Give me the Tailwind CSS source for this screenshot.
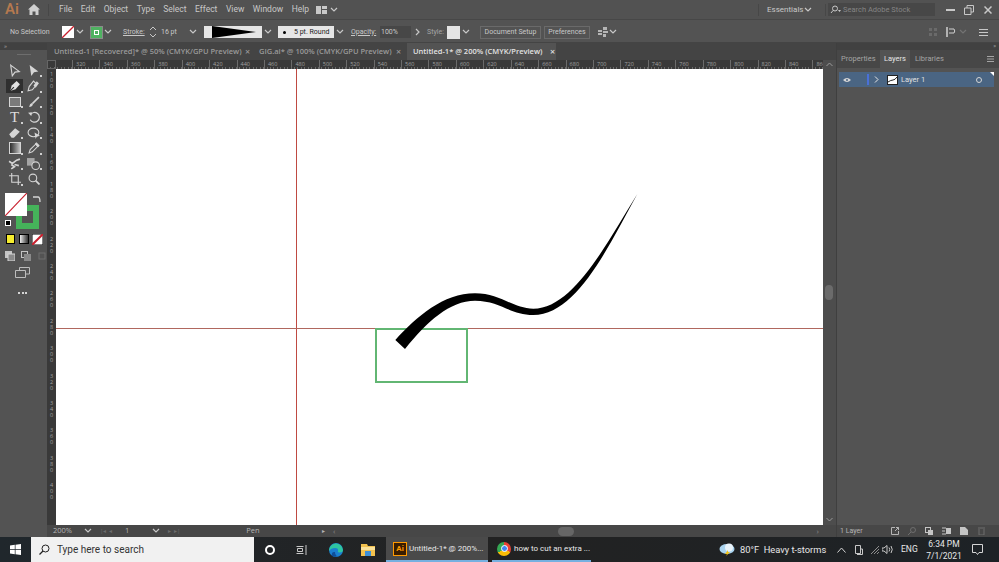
<!DOCTYPE html>
<html lang="en">
<head>
<meta charset="UTF-8">
<title>Adobe Illustrator</title>
<script src="https://cdn.jsdelivr.net/npm/@tailwindcss/browser@4"></script>
</head>
<body class="bg-[#535353]">
<div class="w-[999px] h-[562px] flex flex-col overflow-hidden font-['Open_Sans',sans-serif] text-[#c8c8c8]">

  <!-- Menu bar -->
  <div class="h-[20px] shrink-0 flex items-center bg-[#525252] font-['Roboto',sans-serif] text-[8.500px] border-b border-[#474747]">
    <span class="w-[22px] ml-[5px] text-[15px] leading-none font-semibold text-[#b5794f]">Ai</span>
    <svg class="w-[12px] h-[11px] ml-[1px]" viewBox="0 0 12 11"><path d="M6 0 12 5.500H10.500V11H7.500V7.500H4.500V11H1.500V5.500H0Z" fill="#d0d0d0"/></svg>
    <div class="w-px h-[12px] bg-[#474747] ml-[8px]"></div>
    <div class="flex gap-[8.500px] ml-[10px] w-[241px]">
      <span>File</span><span>Edit</span><span>Object</span><span>Type</span><span>Select</span><span>Effect</span><span>View</span><span>Window</span><span>Help</span>
    </div>
    <svg class="w-[11px] h-[8px] ml-[16px]" viewBox="0 0 11 8"><path d="M0 0H5V8H0ZM6 0H11V3H6ZM6 4H11V8H6Z" fill="#c8c8c8"/></svg>
    <svg class="w-[8px] h-[6px] ml-[3px]" viewBox="0 0 8 6"><path d="M1 1l3 3 3-3" fill="none" stroke="#c8c8c8" stroke-width="1.200"/></svg>
    <div class="w-px h-[12px] bg-[#474747] ml-auto"></div>
    <span class="ml-[8px] w-[33px] text-[8px]">Essentials</span>
    <svg class="w-[8px] h-[6px] ml-[4px]" viewBox="0 0 8 6"><path d="M1 1l3 3 3-3" fill="none" stroke="#c8c8c8" stroke-width="1.200"/></svg>
    <div class="w-px h-[12px] bg-[#474747] ml-[13px]"></div>
    <div class="w-[107px] h-[13px] ml-[2px] bg-[#474747] flex items-center pl-[2px] text-[7.500px] text-[#858585]">
      <svg class="w-[11px] h-[9px] shrink-0" viewBox="0 0 11 9"><circle cx="5" cy="3.500" r="2.500" fill="none" stroke="#c8c8c8"/><path d="M3 5.500 1 8" stroke="#c8c8c8"/><path d="M8 5h3l-1.500 2z" fill="#c8c8c8"/></svg>
      <span class="ml-[2px]">Search Adobe Stock</span>
    </div>
    <div class="w-[9px] h-[2px] bg-[#c8c8c8] ml-[11px]"></div>
    <svg class="w-[10px] h-[10px] ml-[9px]" viewBox="0 0 10 10"><path d="M.5 3H7V9.500H.5ZM3 3V.5H9.500V7H7" fill="none" stroke="#c8c8c8"/></svg>
    <svg class="w-[8px] h-[8px] ml-[10px] mr-[7px]" viewBox="0 0 8 8"><path d="M.5.5l7 7M7.500.5l-7 7" stroke="#c8c8c8" stroke-width="1.500"/></svg>
  </div>

  <!-- Control bar -->
  <div class="h-[23px] shrink-0 flex items-center pt-[2px] bg-[#535353] font-['Roboto',sans-serif] text-[7px] border-b border-[#444444] whitespace-nowrap">
    <span class="w-[46px] ml-[10px] shrink-0">No Selection</span>
    <svg class="w-[12px] h-[12px] ml-[6px] shrink-0" viewBox="0 0 12 12"><rect width="12" height="12" fill="#fff"/><path d="M0 12 12 0" stroke="#c8202e" stroke-width="1.300"/></svg>
    <svg class="w-[8px] h-[6px] ml-[2px] shrink-0" viewBox="0 0 8 6"><path d="M1 1l3 3 3-3" fill="none" stroke="#c8c8c8" stroke-width="1.200"/></svg>
    <div class="w-[13px] h-[13px] ml-[6px] shrink-0 bg-[#4fb261] flex items-center justify-center border border-[#8a8a8a]"><div class="w-[5px] h-[5px] border border-white"></div></div>
    <svg class="w-[8px] h-[6px] ml-[1px] shrink-0" viewBox="0 0 8 6"><path d="M1 1l3 3 3-3" fill="none" stroke="#c8c8c8" stroke-width="1.200"/></svg>
    <span class="w-[21px] ml-[11px] shrink-0 underline">Stroke:</span>
    <svg class="w-[8px] h-[12px] ml-[5px] shrink-0" viewBox="0 0 8 12"><path d="M1 4l3-3 3 3M1 8l3 3 3-3" fill="none" stroke="#c8c8c8"/></svg>
    <span class="w-[27px] ml-[4px] shrink-0">16 pt</span>
    <svg class="w-[8px] h-[6px] ml-[1px] shrink-0" viewBox="0 0 8 6"><path d="M1 1l3 3 3-3" fill="none" stroke="#c8c8c8" stroke-width="1.200"/></svg>
    <div class="w-[58px] h-[12px] ml-[7px] shrink-0 bg-[#e6e6e6] flex items-center pl-[8px]">
      <svg class="w-[44px] h-[12px]" viewBox="0 0 44 12"><path d="M0 0 44 6 0 12Z" fill="#000"/></svg>
    </div>
    <svg class="w-[8px] h-[6px] ml-[2px] shrink-0" viewBox="0 0 8 6"><path d="M1 1l3 3 3-3" fill="none" stroke="#c8c8c8" stroke-width="1.200"/></svg>
    <div class="w-[56px] h-[12px] ml-[6px] shrink-0 bg-[#e6e6e6] flex items-center text-[#222222]">
      <div class="w-[3px] h-[3px] rounded-full bg-black ml-[5px]"></div>
      <span class="ml-[8px]">5 pt. Round</span>
    </div>
    <svg class="w-[8px] h-[6px] ml-[2px] shrink-0" viewBox="0 0 8 6"><path d="M1 1l3 3 3-3" fill="none" stroke="#c8c8c8" stroke-width="1.200"/></svg>
    <span class="w-[25px] ml-[7px] shrink-0 underline">Opacity:</span>
    <div class="w-[31px] h-[12px] ml-[4px] shrink-0 bg-[#474747] pl-[1px] leading-[12px]">100%</div>
    <svg class="w-[7px] h-[8px] ml-[3px] shrink-0" viewBox="0 0 7 8"><path d="M2 1l3 3-3 3" fill="none" stroke="#c8c8c8" stroke-width="1.200"/></svg>
    <span class="w-[17px] ml-[6px] shrink-0 text-[#a5a5a5]">Style:</span>
    <div class="w-[13px] h-[13px] ml-[3px] shrink-0 bg-[#e4e4e4]"></div>
    <svg class="w-[8px] h-[6px] ml-[2px] shrink-0" viewBox="0 0 8 6"><path d="M1 1l3 3 3-3" fill="none" stroke="#c8c8c8" stroke-width="1.200"/></svg>
    <div class="w-[61px] h-[13px] ml-[10px] shrink-0 border border-[#6a6a6a] text-center leading-[11px]">Document Setup</div>
    <div class="w-[46px] h-[13px] ml-[3px] shrink-0 border border-[#6a6a6a] text-center leading-[11px]">Preferences</div>
    <svg class="w-[10px] h-[10px] ml-[8px] shrink-0" viewBox="0 0 10 10"><path d="M0 3H4V5H0ZM0 6H4V8H0ZM5 0H9V3H5ZM5 4H10V6H5ZM5 7H8V10H5Z" fill="#b5b5b5"/></svg>
    <svg class="w-[8px] h-[6px] ml-[1px] shrink-0" viewBox="0 0 8 6"><path d="M1 1l3 3 3-3" fill="none" stroke="#c8c8c8" stroke-width="1.200"/></svg>
    <svg class="w-[9px] h-[9px] ml-auto shrink-0" viewBox="0 0 9 9"><path d="M0 0H3V3H0ZM5 0H8V3H5ZM0 5H3V8H0ZM5 5H8V8H5Z" fill="#6a6a6a"/></svg>
    <svg class="w-[10px] h-[10px] ml-[8px] shrink-0" viewBox="0 0 10 10"><path d="M1 0V10" stroke="#d0d0d0" stroke-width="1.500"/><path d="M3 2H8Q9.500 4 8 6H3" fill="none" stroke="#d0d0d0"/></svg>
    <svg class="w-[8px] h-[6px] ml-[3px] shrink-0" viewBox="0 0 8 6"><path d="M1 1l3 3 3-3" fill="none" stroke="#737373" stroke-width="1.200"/></svg>
    <svg class="w-[9px] h-[7px] ml-[12px] mr-[11px] shrink-0" viewBox="0 0 9 7"><path d="M0 .5H9M0 3.500H9M0 6.500H9" stroke="#c8c8c8"/></svg>
  </div>

  <!-- Work area -->
  <div class="flex-1 min-h-0 flex">

    <!-- Tools -->
    <div class="w-[47px] shrink-0 flex flex-col bg-[#535353]">
      <div class="h-[7px] bg-[#414141] text-[6px] leading-[6px] pl-[4px] text-[#aaaaaa]">&raquo;</div>
      <div class="h-[13px] flex justify-center pt-[4px]"><div class="w-[14px] h-px bg-[#6e6e6e]"></div></div>
      <div class="relative grid grid-cols-[19px_19px] auto-rows-[15.500px] ml-[5px] place-items-center">
        <svg class="w-[12px] h-[13px]" viewBox="0 0 11 12"><path d="M1.500 1 9.500 7 5.500 7.500 3 11Z" fill="none" stroke="#d5d5d5"/></svg>
        <svg class="w-[12px] h-[13px]" viewBox="0 0 11 12"><path d="M1.500 1 9.500 7 5.500 7.500 3 11Z" fill="#d5d5d5"/></svg>
        <div class="w-[17px] h-[14px] bg-[#2f2f2f] flex items-center justify-center"><svg class="w-[12px] h-[12px]" viewBox="0 0 11 11"><path d="M1 10 2.500 5 7 1 10 4 6 8.500Z" fill="#e0e0e0"/><path d="M1 10 4.500 6.500" stroke="#2f2f2f"/></svg></div>
        <svg class="w-[13px] h-[12px]" viewBox="0 0 12 11"><path d="M1 10 2 6 6 1 9 4 5 9Z" fill="none" stroke="#d5d5d5"/><path d="M9 1 11 3 8 7 6 5Z" fill="#d5d5d5"/></svg>
        <div class="w-[12px] h-[10px] border border-[#d5d5d5] bg-[#7a7a7a]"></div>
        <svg class="w-[12px] h-[12px]" viewBox="0 0 11 11"><path d="M10 1 4 7" stroke="#d5d5d5" stroke-width="1.500"/><path d="M1 10Q1.500 7 3.500 6.500L4.500 7.500Q4 10 1 10Z" fill="#d5d5d5"/></svg>
        <span class="text-[15px] leading-none font-['Liberation_Serif',serif] text-[#dddddd]">T</span>
        <svg class="w-[13px] h-[12px]" viewBox="0 0 12 11"><path d="M3 3.500A4.500 4.500 0 1 1 3 8" fill="none" stroke="#d5d5d5" stroke-width="1.100"/><path d="M1 1.500 4.500 1 4 4.500Z" fill="#d5d5d5"/></svg>
        <svg class="w-[13px] h-[12px]" viewBox="0 0 11 10"><path d="M1 6 6 1 10 4 5 9H3Z" fill="#d5d5d5"/></svg>
        <svg class="w-[14px] h-[12px]" viewBox="0 0 13 11"><ellipse cx="6" cy="5" rx="5" ry="4" fill="none" stroke="#d5d5d5"/><path d="M7 5 12 8 9 9 8 11Z" fill="#d5d5d5"/></svg>
        <div class="w-[12px] h-[12px] border border-[#d5d5d5] bg-gradient-to-r from-[#2e2e2e] to-[#c5c5c5]"></div>
        <svg class="w-[12px] h-[12px]" viewBox="0 0 11 11"><path d="M1 10 2 7 7 2 9 4 4 9Z" fill="none" stroke="#d5d5d5"/><path d="M7 1 10 4" stroke="#d5d5d5" stroke-width="2"/></svg>
        <svg class="w-[13px] h-[12px]" viewBox="0 0 12 11"><path d="M1 3 4 5 8 2 11 1M3 6 6 8 3 10M6 6 10 7" fill="none" stroke="#d5d5d5" stroke-width="1.500"/></svg>
        <svg class="w-[13px] h-[12px]" viewBox="0 0 12 11"><rect x="0" y="0" width="7" height="7" fill="#a5a5a5"/><circle cx="8" cy="7" r="3.500" fill="#535353" stroke="#d5d5d5"/></svg>
        <svg class="w-[12px] h-[12px]" viewBox="0 0 11 11"><path d="M2.500 0V8.500H11M0 2.500H8.500V11" fill="none" stroke="#d5d5d5"/></svg>
        <svg class="w-[12px] h-[12px]" viewBox="0 0 11 11"><circle cx="4.500" cy="4.500" r="3.500" fill="none" stroke="#d5d5d5"/><path d="M7 7 10.500 10.500" stroke="#d5d5d5" stroke-width="1.500"/></svg>
        <!-- flyout markers on the tools -->
        <svg class="absolute left-0 top-0 w-[38px] h-[124px]" viewBox="0 0 38 124"><path d="M35 12h2v2h-2zM16 28h2v2h-2zM35 28h2v2h-2zM16 43h2v2h-2zM35 43h2v2h-2zM16 59h2v2h-2zM35 59h2v2h-2zM16 74h2v2h-2zM35 74h2v2h-2zM16 90h2v2h-2zM35 90h2v2h-2zM16 105h2v2h-2zM35 105h2v2h-2zM16 121h2v2h-2z" fill="#cfcfcf"/></svg>
      </div>
      <!-- fill and stroke -->
      <div class="relative h-[40px] mt-[6px] shrink-0">
        <div class="absolute left-[16px] top-[12px] w-[23px] h-[24px] border-[6px] border-[#45b35a]"></div>
        <svg class="absolute left-[5px] top-0 w-[22px] h-[23px]" viewBox="0 0 22 23"><rect width="22" height="23" fill="#fff"/><path d="M0 23 22 0" stroke="#c8202e" stroke-width="1.200"/></svg>
        <svg class="absolute left-[32px] top-[2px] w-[9px] h-[9px]" viewBox="0 0 9 9"><path d="M1 2H6Q8 2 8 7" fill="none" stroke="#d5d5d5" stroke-width="1.300"/></svg>
        <div class="absolute left-[5px] top-[27px] w-[6px] h-[6px] bg-black border border-white"></div>
      </div>
      <div class="flex items-center ml-[6px] gap-[3px] h-[12px]">
        <div class="w-[9px] h-[10px] bg-[#f6ec2e] border border-black"></div>
        <div class="w-[10px] h-[10px] ml-[1px] bg-gradient-to-r from-[#eeeeee] to-[#333333] border border-black"></div>
        <svg class="w-[11px] h-[11px]" viewBox="0 0 11 11"><rect width="11" height="11" fill="#fff" stroke="#000"/><path d="M0 11 11 0" stroke="#c8202e" stroke-width="2"/></svg>
      </div>
      <div class="flex items-center ml-[5px] gap-[5px] h-[12px] mt-[5px]">
        <svg class="w-[10px] h-[10px]" viewBox="0 0 10 10"><rect x="0" y="0" width="7" height="7" fill="#c5c5c5"/><rect x="3" y="3" width="7" height="7" fill="#8a8a8a" stroke="#d5d5d5"/></svg>
        <svg class="w-[10px] h-[10px] ml-[1px]" viewBox="0 0 10 10"><rect x="0.500" y="0.500" width="6" height="6" fill="none" stroke="#c5c5c5"/><rect x="3" y="3" width="7" height="7" fill="#8a8a8a"/></svg>
        <svg class="w-[8px] h-[8px] ml-[2px]" viewBox="0 0 8 8"><rect x="1" y="1" width="6" height="6" fill="none" stroke="#6e6e6e"/></svg>
      </div>
      <svg class="w-[15px] h-[11px] ml-[15px] mt-[5px]" viewBox="0 0 15 11"><path d="M4.500 3V.5H14.500V7H10.500M.5 3.500H10.500V10.500H.5Z" fill="none" stroke="#bdbdbd"/></svg>
      <div class="flex gap-[1.500px] ml-[18px] mt-[14px]">
        <div class="w-[2px] h-[2px] bg-[#d5d5d5]"></div><div class="w-[2px] h-[2px] bg-[#d5d5d5]"></div><div class="w-[2px] h-[2px] bg-[#d5d5d5]"></div>
      </div>
    </div>

    <!-- Document -->
    <div class="w-[789px] shrink-0 flex flex-col">
      <!-- Tabs -->
      <div class="h-[17px] shrink-0 flex items-center bg-[#444444] text-[7.500px] font-semibold text-[#9a9a9a] whitespace-nowrap">
        <span class="ml-[7px] w-[186px] pt-[1px]">Untitled-1 [Recovered]* @ 50% (CMYK/GPU Preview)</span>
        <span class="ml-[5px] w-[10px] text-[9px]">×</span>
        <span class="ml-[4px] w-[131px] pt-[1px]">GIG.ai* @ 100% (CMYK/GPU Preview)</span>
        <span class="ml-[6px] w-[10px] text-[9px]">×</span>
        <div class="ml-[1px] w-[149px] h-full bg-[#535353] flex items-center text-[#e2e2e2]">
          <span class="ml-[6px] w-[130px] pt-[1px]">Untitled-1* @ 200% (CMYK/Preview)</span>
          <span class="ml-[7px] text-[9px]">×</span>
        </div>
      </div>
      <!-- Horizontal ruler -->
      <div class="relative h-[9px] shrink-0 flex bg-[#393939] bg-[repeating-linear-gradient(90deg,#6b6b6b_0,#6b6b6b_1px,transparent_1px,transparent_3.430px)] bg-[length:100%_2px] bg-bottom bg-no-repeat">
        <div class="w-[9px] shrink-0 border border-[#666666]"></div>
        <div class="flex text-[5.500px] leading-[8px] text-[#a0a0a0] ml-[16px]" id="ruler-x"></div>
        <div class="absolute right-0 top-0 w-[13px] h-full bg-[#4d4d4d] flex items-center justify-center">
          <svg class="w-[7px] h-[5px]" viewBox="0 0 7 5"><path d="M.5 4 3.500 1 6.500 4" fill="none" stroke="#9a9a9a"/></svg>
        </div>
      </div>
      <!-- Canvas row -->
      <div class="flex-1 min-h-0 flex">
        <div class="w-[9px] shrink-0 bg-[#393939] flex flex-col items-center text-[5.500px] leading-[6px] text-[#a0a0a0] overflow-hidden" id="ruler-y"></div>
        <div class="w-[767px] shrink-0 bg-white relative overflow-hidden">
          <div class="absolute left-[240px] top-0 w-px h-full bg-[#bf4a42]"></div>
          <div class="absolute left-0 top-[259px] w-full h-px bg-[#b0675e]"></div>
          <div class="absolute left-[319px] top-[259px] w-[93px] h-[55px] border-2 border-[#62b673]"></div>
          <svg class="absolute left-[304px] top-[111px] w-[290px] h-[210px]" viewBox="0 0 870 630"><path d="M106 480C170 410 250 340 345 340C420 340 460 386 520 386C640 386 740 190 832 42C745 200 650 405 520 405C450 405 420 362 345 362C270 362 200 425 135 507Z" fill="#000"/></svg>
        </div>
        <div class="w-[13px] shrink-0 bg-[#4d4d4d] flex flex-col items-center relative">
          <div class="absolute top-[216px] left-[2px] w-[8px] h-[15px] rounded-full bg-[#6b6b6b]"></div>
          <svg class="absolute bottom-[3px] left-[3px] w-[7px] h-[5px]" viewBox="0 0 7 5"><path d="M.5 1 3.500 4 6.500 1" fill="none" stroke="#9a9a9a"/></svg>
        </div>
      </div>
      <!-- Status bar -->
      <div class="h-[12px] shrink-0 flex items-center bg-[#474747] text-[7.500px] text-[#b5b5b5] whitespace-nowrap">
        <span class="w-[20px] ml-[6px]">200%</span>
        <svg class="w-[8px] h-[6px] ml-[11px]" viewBox="0 0 8 6"><path d="M1 1l3 3 3-3" fill="none" stroke="#c8c8c8" stroke-width="1.200"/></svg>
        <span class="ml-[8px] w-[24px] text-[#6e6e6e] text-[6px]">|◂ &nbsp;◂</span>
        <span class="ml-[1px] w-[24px]">1</span>
        <svg class="w-[8px] h-[6px] ml-[3px]" viewBox="0 0 8 6"><path d="M1 1l3 3 3-3" fill="none" stroke="#c8c8c8" stroke-width="1.200"/></svg>
        <span class="ml-[8px] w-[24px] text-[#6e6e6e] text-[6px]">▸ &nbsp;▸|</span>
        <span class="ml-[26px] w-[70px] text-center">Pen</span>
        <span class="ml-[34px] text-[6px]">▸</span>
        <span class="ml-[8px] text-[#8a8a8a] text-[8px]">‹</span>
        <div class="ml-[223px] w-[16px] h-[9px] rounded-full bg-[#666666]"></div>
        <span class="ml-[242px] text-[#8a8a8a] text-[8px]">›</span>
      </div>
    </div>

    <!-- Right panels -->
    <div class="flex-1 flex flex-col bg-[#535353] border-l border-[#3f3f3f] font-['Roboto',sans-serif] text-[7.500px]">
      <div class="h-[7px] bg-[#414141] text-[6px] leading-[6px] text-right pr-[3px] text-[#aaaaaa]">&raquo;</div>
      <div class="h-[18px] flex items-center bg-[#474747] whitespace-nowrap">
        <span class="ml-[4px] w-[31px] text-[#a5a5a5]">Properties</span>
        <div class="ml-[8px] w-[30px] h-full bg-[#535353] flex items-center justify-center text-[#e5e5e5]">Layers</div>
        <span class="ml-[5px] w-[25px] text-[#a5a5a5]">Libraries</span>
        <svg class="w-[7px] h-[6px] ml-[47px]" viewBox="0 0 7 6"><path d="M0 .5H7M0 3H7M0 5.500H7" stroke="#a5a5a5"/></svg>
      </div>
      <div class="h-[15px] mt-[4px] ml-[2px] mr-[5px] bg-[#4a6583] flex items-center relative">
        <svg class="w-[8px] h-[6px] ml-[4px]" viewBox="0 0 8 6"><path d="M0 3Q4-1 8 3 4 7 0 3Z" fill="#d5d5d5"/><circle cx="4" cy="3" r="1" fill="#4a6583"/></svg>
        <div class="w-[2px] h-[11px] ml-[16px] bg-[#4a70d8]"></div>
        <svg class="w-[5px] h-[7px] ml-[5px]" viewBox="0 0 5 7"><path d="M1 .5 4 3.500 1 6.500" fill="none" stroke="#e5e5e5"/></svg>
        <div class="w-[11px] h-[10px] ml-[8px] bg-white border border-[#222222] flex items-center justify-center">
          <svg class="w-[9px] h-[6px]" viewBox="0 0 9 6"><path d="M0 5Q3 3 5 3 7 3 9 0" fill="none" stroke="#222"/></svg>
        </div>
        <span class="ml-[3px] w-[23px] whitespace-nowrap text-[#e0e0e0]">Layer 1</span>
        <div class="w-[6px] h-[6px] rounded-full border border-[#d5d5d5] ml-[52px]"></div>
        <div class="absolute right-0 top-0 w-0 h-0 border-t-[4px] border-l-[4px] border-t-white border-l-transparent"></div>
      </div>
      <div class="flex-1"></div>
      <div class="h-[12px] flex items-center bg-[#474747] text-[#b5b5b5]">
        <span class="ml-[3px] w-[24px] text-[7px]">1 Layer</span>
        <svg class="w-[8px] h-[8px] ml-[27px]" viewBox="0 0 8 8"><path d="M4 .5H.5V7.500H7.500V4M4 4 7.500.5M5 .5H7.500V3" fill="none" stroke="#b5b5b5"/></svg>
        <svg class="w-[8px] h-[8px] ml-[9px]" viewBox="0 0 8 8"><circle cx="5" cy="3" r="2.500" fill="none" stroke="#6e6e6e"/><path d="M3 5 0 8" stroke="#6e6e6e"/></svg>
        <svg class="w-[8px] h-[8px] ml-[9px]" viewBox="0 0 8 8"><rect x=".5" y=".5" width="5" height="5" fill="none" stroke="#c5c5c5"/><rect x="3" y="3" width="5" height="5" fill="#c5c5c5"/></svg>
        <svg class="w-[9px] h-[8px] ml-[9px]" viewBox="0 0 9 8"><path d="M0 1H4M0 4H3M0 7H4" stroke="#c5c5c5"/><rect x="4" y="1" width="5" height="6" fill="#c5c5c5"/></svg>
        <svg class="w-[8px] h-[8px] ml-[9px]" viewBox="0 0 8 8"><path d="M0 0H5L8 3V8H0Z" fill="#c5c5c5"/></svg>
        <svg class="w-[7px] h-[8px] ml-[10px]" viewBox="0 0 7 8"><path d="M0 1H7M1 2V8H6V2" fill="none" stroke="#6e6e6e"/></svg>
      </div>
    </div>
  </div>

  <!-- Windows taskbar -->
  <div class="h-[25px] shrink-0 flex items-center bg-gradient-to-r from-[#20272c] via-[#222222] to-[#1d2226] font-['Roboto',sans-serif] text-[#e8e8e8] whitespace-nowrap">
    <svg class="w-[11px] h-[11px] ml-[10px] shrink-0" viewBox="0 0 11 11"><path d="M0 1.500 4.800.8V5.200H0ZM5.500.7 11 0V5.200H5.500ZM0 5.900H4.800V10.200L0 9.500ZM5.500 5.900H11V11L5.500 10.300Z" fill="#fff"/></svg>
    <div class="w-[223px] h-[25px] ml-[10px] shrink-0 bg-[#f1f1f1] flex items-center text-[#333333] text-[10px]">
      <svg class="w-[11px] h-[11px] ml-[8px]" viewBox="0 0 11 11"><circle cx="6.500" cy="4.500" r="3.500" fill="none" stroke="#222"/><path d="M4 7 .5 10.500" stroke="#222" stroke-width="1.200"/></svg>
      <span class="ml-[7px]">Type here to search</span>
    </div>
    <div class="w-[10px] h-[10px] ml-[11px] shrink-0 rounded-full border-2 border-white"></div>
    <svg class="w-[11px] h-[10px] ml-[21px] shrink-0" viewBox="0 0 11 10"><path d="M.5 1.500H7.500M.5 8.500H7.500M1.500 3.500H6.500V6.500H1.500ZM10 0V10" fill="none" stroke="#c8c8c8"/></svg>
    <svg class="w-[14px] h-[14px] ml-[22px] shrink-0" viewBox="0 0 14 14"><circle cx="7" cy="7" r="7" fill="#1a7fd0"/><path d="M0 8A7 7 0 0 1 14 7Q14 9.500 10.500 9.500 8.500 9.500 9 8 9.500 5 6 5 2 5 0 8Z" fill="#2fc5a0"/><path d="M3 13Q5 14 8 13.500 5.500 11 6 9 2 8.500 3 13Z" fill="#0f4f9a"/></svg>
    <svg class="w-[14px] h-[12px] ml-[18px] shrink-0" viewBox="0 0 14 12"><path d="M0 0H6L7 2H14V12H0Z" fill="#f2c14e"/><path d="M0 3H14V6H0Z" fill="#fbe29a"/><rect x="4" y="7" width="6" height="5" fill="#3d8fd6"/></svg>
    <div class="w-[102px] h-[25px] ml-[11px] shrink-0 bg-[#4a4a4a] border-b-2 border-[#76b0e0] flex items-center text-[8px]">
      <div class="w-[14px] h-[14px] ml-[7px] shrink-0 bg-[#3a1d00] border border-[#ff9a00] flex items-center justify-center text-[8px] font-bold leading-none text-[#ff9a00]">Ai</div>
      <span class="ml-[2px]">Untitled-1* @ 200%...</span>
    </div>
    <div class="w-[99px] h-[25px] ml-[4px] shrink-0 border-b-2 border-[#76b0e0] flex items-center text-[8px]">
      <div class="w-[14px] h-[14px] ml-[5px] shrink-0 rounded-full bg-[conic-gradient(#ea4335_0_33%,#fbbc05_33%_66%,#34a853_66%)] flex items-center justify-center">
        <div class="w-[7px] h-[7px] rounded-full bg-[#4285f4] border border-white"></div>
      </div>
      <span class="ml-[3px]">how to cut an extra ...</span>
    </div>
    <svg class="w-[16px] h-[13px] ml-auto shrink-0" viewBox="0 0 16 13"><ellipse cx="8" cy="6" rx="7.500" ry="5" fill="#a9d4f0"/><ellipse cx="10" cy="4.500" rx="4" ry="4" fill="#e8f3fa"/><path d="M9 7 6 11 8 11 7 13 11 9 9 9Z" fill="#f5c518"/></svg>
    <span class="ml-[5px] w-[85px] shrink-0 text-[9.300px]">80°F&nbsp; Heavy t-storms</span>
    <svg class="w-[9px] h-[6px] ml-[12px] shrink-0" viewBox="0 0 9 6"><path d="M.5 5.500 4.500 1 8.500 5.500" fill="none" stroke="#d5d5d5"/></svg>
    <svg class="w-[8px] h-[10px] ml-[9px] shrink-0" viewBox="0 0 8 10"><path d="M.5.5H5.500V8.500H.5ZM2 9.500H7.500V4H5.500" fill="none" stroke="#c8c8c8"/></svg>
    <svg class="w-[9px] h-[8px] ml-[8px] shrink-0" viewBox="0 0 9 8"><path d="M0 8 8 0M3 8 8 3M6 8 8 6" stroke="#8e8e8e"/></svg>
    <svg class="w-[11px] h-[9px] ml-[2px] shrink-0" viewBox="0 0 11 9"><path d="M0 3H2L5 .5V8.500L2 6H0Z" fill="none" stroke="#c8c8c8"/><path d="M7 2.500Q8.500 4.500 7 6.500M9 1Q11.500 4.500 9 8" fill="none" stroke="#c8c8c8"/></svg>
    <span class="ml-[8px] w-[17px] shrink-0 text-[8.500px]">ENG</span>
    <div class="ml-[8px] w-[36px] shrink-0 flex flex-col items-center text-[8.500px] leading-[12px]"><span>6:34 PM</span><span>7/1/2021</span></div>
    <svg class="w-[11px] h-[11px] ml-[10px] mr-[16px] shrink-0" viewBox="0 0 11 11"><path d="M.5.5H10.500V8.500H7L5.500 10.500 4 8.500H.5Z" fill="none" stroke="#d5d5d5"/></svg>
  </div>
</div>
<script>
  // ruler labels
  const rulerX = document.getElementById("ruler-x");
  for (let v = 320; v <= 860; v += 20) {
    const s = document.createElement("span");
    s.textContent = v;
    s.className = "w-[27.430px] shrink-0 border-l border-[#6b6b6b] pl-[3px]";
    rulerX.appendChild(s);
  }
  const rulerY = document.getElementById("ruler-y");
  for (let v = 100; v <= 400; v += 20) {
    const s = document.createElement("div");
    s.textContent = String(v).split("").join(" ");
    s.className = "w-[3px] h-[27.430px] shrink-0 break-all text-center pt-[2px]";
    rulerY.appendChild(s);
  }
</script>
</body>
</html>
